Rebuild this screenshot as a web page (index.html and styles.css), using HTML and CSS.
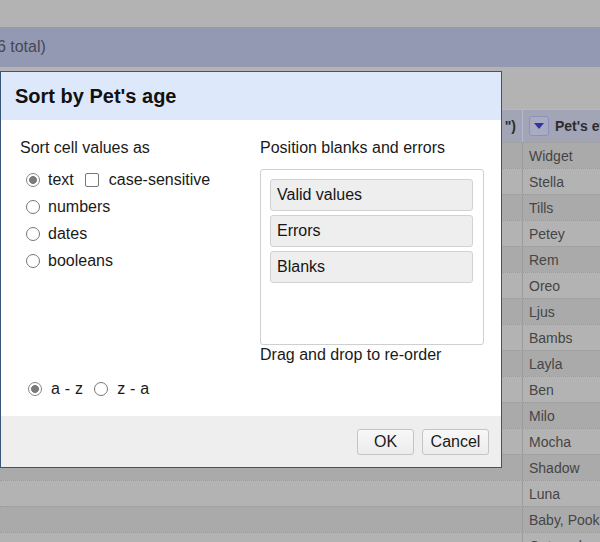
FILE: index.html
```html
<!DOCTYPE html>
<html>
<head>
<meta charset="utf-8">
<link rel="stylesheet" href="styles.css">
</head>
<body>
<div class="page">
  <div class="topbar"></div>
  <div class="band"><span class="count">16 total)</span></div>
  <div class="toolbar"></div>
  <div class="grid">
    <div class="row head">
      <div class="c1"><span class="hcut">")</span></div>
      <div class="c2"><span class="dd"><svg width="12" height="8" viewBox="0 0 12 8"><path d="M1 1 H11 L6 7 Z" fill="#3232a6"/></svg></span><span class="hname">Pet's everyday name</span></div>
    </div>
    <div class="row dark"><div class="c1"></div><div class="c2">Widget</div></div>
    <div class="row"><div class="c1"></div><div class="c2">Stella</div></div>
    <div class="row dark"><div class="c1"></div><div class="c2">Tills</div></div>
    <div class="row"><div class="c1"></div><div class="c2">Petey</div></div>
    <div class="row dark"><div class="c1"></div><div class="c2">Rem</div></div>
    <div class="row"><div class="c1"></div><div class="c2">Oreo</div></div>
    <div class="row dark"><div class="c1"></div><div class="c2">Ljus</div></div>
    <div class="row"><div class="c1"></div><div class="c2">Bambs</div></div>
    <div class="row dark"><div class="c1"></div><div class="c2">Layla</div></div>
    <div class="row"><div class="c1"></div><div class="c2">Ben</div></div>
    <div class="row dark"><div class="c1"></div><div class="c2">Milo</div></div>
    <div class="row"><div class="c1"></div><div class="c2">Mocha</div></div>
    <div class="row dark"><div class="c1"></div><div class="c2">Shadow</div></div>
    <div class="row"><div class="c1"></div><div class="c2">Luna</div></div>
    <div class="row dark"><div class="c1"></div><div class="c2">Baby, Pookie</div></div>
    <div class="row"><div class="c1"></div><div class="c2">Oatmeal</div></div>
  </div>
</div>

<div class="dialog">
  <div class="dlg-head">Sort by Pet's age</div>
  <div class="dlg-body">
    <div class="cols">
      <div class="col-left">
        <div class="label">Sort cell values as</div>
        <div class="opt">
          <input type="radio" name="t" class="radio" checked><span class="otext">text</span>
          <input type="checkbox" class="check"><span class="ctext">case-sensitive</span>
        </div>
        <div class="opt"><input type="radio" name="t" class="radio"><span class="otext">numbers</span></div>
        <div class="opt"><input type="radio" name="t" class="radio"><span class="otext">dates</span></div>
        <div class="opt"><input type="radio" name="t" class="radio"><span class="otext">booleans</span></div>
      </div>
      <div class="col-right">
        <div class="label">Position blanks and errors</div>
        <div class="box">
          <div class="item">Valid values</div>
          <div class="item">Errors</div>
          <div class="item">Blanks</div>
        </div>
        <div class="hint">Drag and drop to re-order</div>
      </div>
    </div>
    <div class="dir">
      <input type="radio" name="d" class="radio" checked><span class="dtext">a - z</span>
      <input type="radio" name="d" class="radio r2"><span class="dtext">z - a</span>
    </div>
  </div>
  <div class="dlg-foot">
    <button class="btn ok">OK</button>
    <button class="btn cancel">Cancel</button>
  </div>
</div>
</body>
</html>
```

FILE: styles.css
```css
html, body {
  margin: 0;
  padding: 0;
}
body {
  width: 600px;
  height: 542px;
  overflow: hidden;
  position: relative;
  font-family: "Liberation Sans", Arial, sans-serif;
  background: #b3b3b3;
}
.page {
  width: 600px;
  height: 542px;
  overflow: hidden;
}
.topbar {
  height: 27px;
  background: #b3b3b3;
}
.band {
  height: 40px;
  background: #9499b3;
  display: flex;
  align-items: center;
  overflow: hidden;
}
.count {
  font-size: 16px;
  color: #454856;
  margin-left: -12px;
  white-space: nowrap;
}
.toolbar {
  height: 42px;
  background: #b3b3b3;
}
.grid {
  display: flex;
  flex-direction: column;
}
.row {
  display: flex;
  height: 26px;
  flex: none;
  box-sizing: border-box;
  border-top: 1px dotted #9a9a9a;
  background: #b3b3b3;
  font-size: 14px;
  color: #454545;
}
.row.dark {
  background: #aaaaaa;
}
.row.head {
  height: 33px;
  background: #a2a5b5;
  border-top: 1px solid #b4b8cc;
}
.c1 {
  width: 522px;
  flex: none;
  display: flex;
  align-items: center;
  justify-content: flex-end;
}
.c2 {
  flex: 1;
  border-left: 1px solid #9a9a9a;
  display: flex;
  align-items: center;
  padding-left: 6px;
  white-space: nowrap;
  overflow: hidden;
}
.head .c2 {
  border-left-color: #b4b8cc;
}
.hcut {
  font-weight: bold;
  color: #2c2c30;
  margin-right: 6px;
}
.dd {
  width: 18px;
  height: 18px;
  border: 1px solid #8c90c0;
  border-radius: 3px;
  background: #a9acc0;
  display: flex;
  align-items: center;
  justify-content: center;
  margin-right: 6px;
  flex: none;
}
.hname {
  font-weight: bold;
  color: #2c2c30;
}

/* dialog overlay */
.dialog {
  position: absolute;
  left: 0;
  top: 71px;
  width: 502px;
  height: 397px;
  box-sizing: border-box;
  border: 1px solid #39557a;
  background: #fff;
  display: flex;
  flex-direction: column;
  color: #1a1a1a;
}
.dlg-head {
  height: 48px;
  background: #dde9fb;
  display: flex;
  align-items: center;
  padding-left: 14px;
  font-size: 20px;
  font-weight: bold;
  color: #111;
}
.dlg-body {
  height: 296px;
  box-sizing: border-box;
  padding: 18px 0 0 19px;
  font-size: 16px;
}
.cols {
  display: flex;
}
.col-left {
  width: 240px;
  flex: none;
}
.col-right {
  width: 224px;
  flex: none;
}
.label {
  line-height: 20px;
  height: 20px;
}
.col-left .label {
  margin-bottom: 8px;
}
.opt {
  height: 27px;
  display: flex;
  align-items: center;
}
.radio {
  -webkit-appearance: none;
  appearance: none;
  width: 14px;
  height: 14px;
  margin: 0 0 0 6px;
  border: 1px solid #777;
  border-radius: 50%;
  background: #fff;
  box-sizing: border-box;
  flex: none;
}
.radio:checked {
  border-color: #858585;
  background: radial-gradient(circle, #7b7b7b 0 3.6px, #fff 4.3px);
}
.otext {
  margin-left: 8px;
}
.check {
  -webkit-appearance: none;
  appearance: none;
  width: 14px;
  height: 14px;
  margin: 0 0 0 11px;
  border: 1px solid #777;
  border-radius: 2px;
  background: #fff;
  box-sizing: border-box;
  flex: none;
}
.ctext {
  margin-left: 10px;
}
.col-right .label {
  margin-bottom: 11px;
}
.box {
  height: 176px;
  box-sizing: border-box;
  border: 1px solid #cfcfcf;
  border-radius: 3px;
  padding: 9px 10px 0 9px;
  display: flex;
  flex-direction: column;
  gap: 4px;
}
.item {
  height: 32px;
  box-sizing: border-box;
  background: #eeeeee;
  border: 1px solid #d2d2d2;
  border-radius: 3px;
  display: flex;
  align-items: center;
  padding-left: 6px;
  color: #151515;
}
.hint {
  line-height: 20px;
}
.dir {
  margin-top: 10px;
  height: 27px;
  display: flex;
  align-items: center;
}
.dir .radio {
  margin-left: 8px;
}
.dir .radio.r2 {
  margin-left: 11px;
}
.dtext {
  margin-left: 9px;
  letter-spacing: 0.2px;
}
.dlg-foot {
  flex: 1;
  background: #eeeeee;
  display: flex;
  justify-content: flex-end;
  align-items: flex-start;
  padding: 13px 12px 0 0;
  gap: 8px;
}
.btn {
  height: 26px;
  box-sizing: border-box;
  border: 1px solid #c4c4c4;
  border-radius: 3px;
  background: linear-gradient(#f8f8f8, #ececec);
  font-family: "Liberation Sans", Arial, sans-serif;
  font-size: 16px;
  color: #1a1a1a;
  padding: 0;
}
.btn.ok {
  width: 57px;
}
.btn.cancel {
  width: 67px;
}
```
